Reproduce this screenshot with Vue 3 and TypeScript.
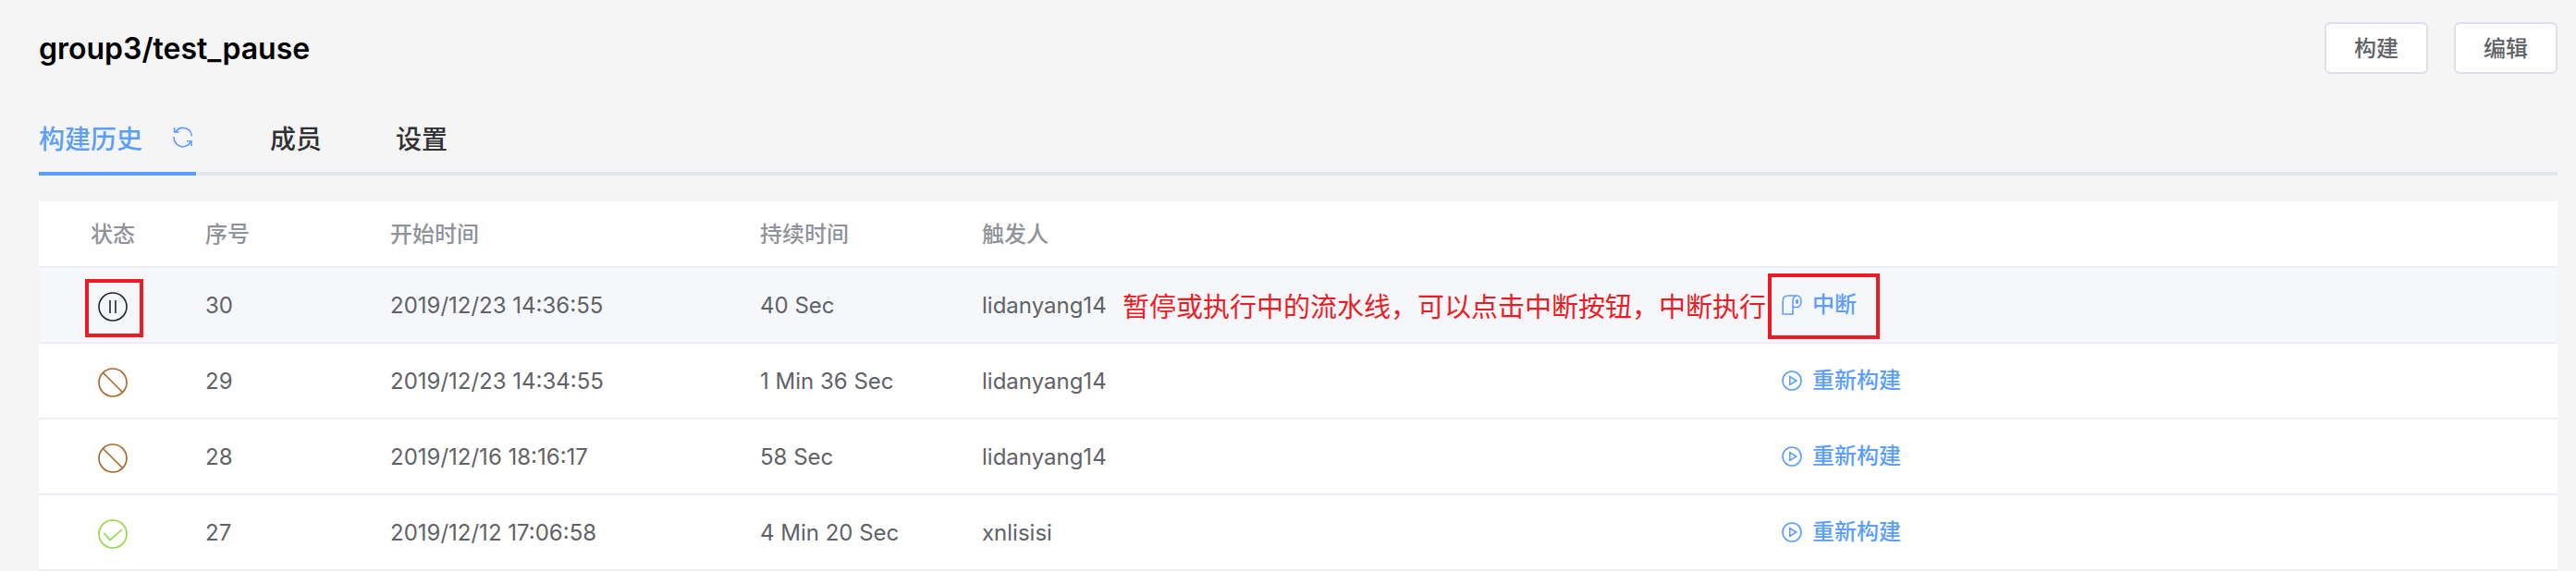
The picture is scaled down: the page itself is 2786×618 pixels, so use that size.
<script setup lang="ts">
import { ref } from 'vue'

type Status = 'paused' | 'aborted' | 'success'

interface Build {
  id: number
  status: Status
  startedAt: string
  duration: string
  trigger: string
}

const builds: Build[] = [
  { id: 30, status: 'paused', startedAt: '2019/12/23 14:36:55', duration: '40 Sec', trigger: 'lidanyang14' },
  { id: 29, status: 'aborted', startedAt: '2019/12/23 14:34:55', duration: '1 Min 36 Sec', trigger: 'lidanyang14' },
  { id: 28, status: 'aborted', startedAt: '2019/12/16 18:16:17', duration: '58 Sec', trigger: 'lidanyang14' },
  { id: 27, status: 'success', startedAt: '2019/12/12 17:06:58', duration: '4 Min 20 Sec', trigger: 'xnlisisi' },
]

const tabs = ['构建历史', '成员', '设置']
const activeTab = ref(0)
</script>

<template>
  <main class="page">
    <header class="page-header">
      <h1>group3/test_pause</h1>
      <div class="header-actions">
        <button type="button" class="btn">构建</button>
        <button type="button" class="btn">编辑</button>
      </div>
    </header>

    <nav class="tabs" role="tablist">
      <button
        v-for="(tab, i) in tabs"
        :key="tab"
        type="button"
        role="tab"
        class="tab"
        :class="{ active: i === activeTab }"
        :aria-selected="i === activeTab"
        @click="activeTab = i"
      >
        {{ tab }}
        <svg v-if="i === 0" class="refresh" viewBox="0 0 26 26" aria-hidden="true">
          <path d="M4 6.5A9.6 9.6 0 0 1 21.4 11.5M2.6 2v5h5M20 18A9.6 9.6 0 0 1 2.2 12M21 22v-5.2h-5" />
        </svg>
      </button>
    </nav>

    <table class="history">
      <colgroup>
        <col class="col-status" />
        <col class="col-id" />
        <col class="col-start" />
        <col class="col-duration" />
        <col />
        <col />
      </colgroup>
      <thead>
        <tr>
          <th class="center">状态</th>
          <th>序号</th>
          <th>开始时间</th>
          <th>持续时间</th>
          <th>触发人</th>
          <th></th>
        </tr>
      </thead>
      <tbody>
        <tr v-for="b in builds" :key="b.id" :class="{ current: b.status === 'paused' }">
          <td class="center status-cell">
            <span class="status" :class="b.status">
              <svg viewBox="0 0 32 32" aria-hidden="true">
                <circle cx="16" cy="16" r="15" />
                <path v-if="b.status === 'paused'" d="M13 9v14M19 9v14" />
                <path v-else-if="b.status === 'aborted'" d="M5.5 5.5l21 21" />
                <path v-else d="M6.500 15l6.500 7.500 13-11.500" />
              </svg>
              <span v-if="b.status === 'paused'" class="mark mark-status"></span>
            </span>
          </td>
          <td>{{ b.id }}</td>
          <td>{{ b.startedAt }}</td>
          <td>{{ b.duration }}</td>
          <td>{{ b.trigger }}</td>
          <td class="ops">
            <span class="op">
              <button type="button" class="link">
                <svg v-if="b.status === 'paused'" viewBox="0 0 24 24" aria-hidden="true">
                  <path d="M17.500 2H8C4 2 2.200 4.500 2.200 8v14h10.800V8.500C13 4.500 14.800 2 17.500 2s4.500 2.800 4.500 6.300-1.800 6.200-4.500 6.200H13" />
                  <ellipse cx="17.500" cy="8.500" rx="0.800" ry="1.600" />
                </svg>
                <svg v-else viewBox="0 0 24 24" aria-hidden="true">
                  <circle cx="12" cy="12" r="10" />
                  <path d="M9.800 7.600v8.800l7-4.400z" />
                </svg>
                {{ b.status === 'paused' ? '中断' : '重新构建' }}
              </button>
              <template v-if="b.status === 'paused'">
                <span class="mark mark-op"></span>
                <span class="note">暂停或执行中的流水线，可以点击中断按钮，中断执行</span>
              </template>
            </span>
          </td>
        </tr>
      </tbody>
    </table>
  </main>
</template>

<style>
body {
  margin: 0;
  background: #f5f5f5;
}
</style>

<style scoped>
.page {
  box-sizing: border-box;
  padding: 24px 20px 0 42px;
  font-family: Inter, 'Noto Sans CJK SC', sans-serif;
  font-size: 24px;
  color: #606266;
}

button {
  font: inherit;
  cursor: pointer;
}

svg {
  display: block;
  flex: none;
  fill: none;
  stroke: currentColor;
  stroke-width: 1.6;
}

.page-header {
  display: flex;
  justify-content: space-between;
  align-items: center;
}

h1 {
  margin: 0;
  padding-top: 2px;
  font-size: 32px;
  line-height: 54px;
  font-weight: 600;
  color: #000;
}

.header-actions {
  display: flex;
  gap: 28px;
}

.btn {
  box-sizing: border-box;
  width: 112px;
  height: 56px;
  padding: 0 0 4px;
  border: 2px solid #dcdfe6;
  border-radius: 6px;
  background: #fff;
  color: #606266;
  font-weight: 500;
}

.tabs {
  display: flex;
  gap: 80px;
  margin-top: 30px;
  box-shadow: inset 0 -4px #e4e7ed;
}

.tab {
  display: flex;
  align-items: center;
  gap: 32px;
  height: 80px;
  padding: 0 0 2px;
  border: 0;
  background: none;
  font-size: 28px;
  font-weight: 500;
  color: #303133;
}

.tab.active {
  color: #5b9ffa;
  box-shadow: inset 0 -4px #5b9ffa;
}

.refresh {
  width: 26px;
  height: 26px;
}

.history {
  width: 100%;
  margin-top: 28px;
  table-layout: fixed;
  border-spacing: 0;
  background: #fff;
}

.col-status { width: 160px; }
.col-id { width: 200px; }
.col-start { width: 400px; }
.col-duration { width: 240px; }

th,
td {
  box-sizing: border-box;
  height: 82px;
  padding: 0 20px;
  border-bottom: 2px solid #ebeef5;
  text-align: left;
  white-space: nowrap;
}

th {
  height: 72px;
  padding-bottom: 4px;
  font-weight: 500;
  color: #909399;
}

.center {
  text-align: center;
}

.status-cell {
  padding-top: 4px;
}

.current td {
  background: #f5f7fa;
}

.status {
  position: relative;
  display: inline-block;
  vertical-align: middle;
}

.status svg {
  width: 32px;
  height: 32px;
}

.paused { color: #22252c; }
.aborted { color: #ab6526; }
.success { color: #92d744; }

.mark {
  position: absolute;
  box-sizing: border-box;
  border: 4px solid #ed1c24;
  pointer-events: none;
}

.mark-status {
  inset: -14px -17px -17px -14px;
}

.ops {
  padding-left: 22px;
}

.op {
  position: relative;
  display: inline-block;
  vertical-align: middle;
}

.link {
  display: flex;
  align-items: center;
  gap: 10px;
  padding: 0;
  border: 0;
  background: none;
  line-height: 36px;
  font-weight: 500;
  color: #5b9ffa;
}

.link svg {
  width: 24px;
  height: 24px;
}

.mark-op {
  inset: -16px -25px -19px -14px;
}

.note {
  position: absolute;
  right: calc(100% + 16px);
  top: 0;
  font-size: 29px;
  line-height: 42px;
  color: #ed1c24;
}
</style>
